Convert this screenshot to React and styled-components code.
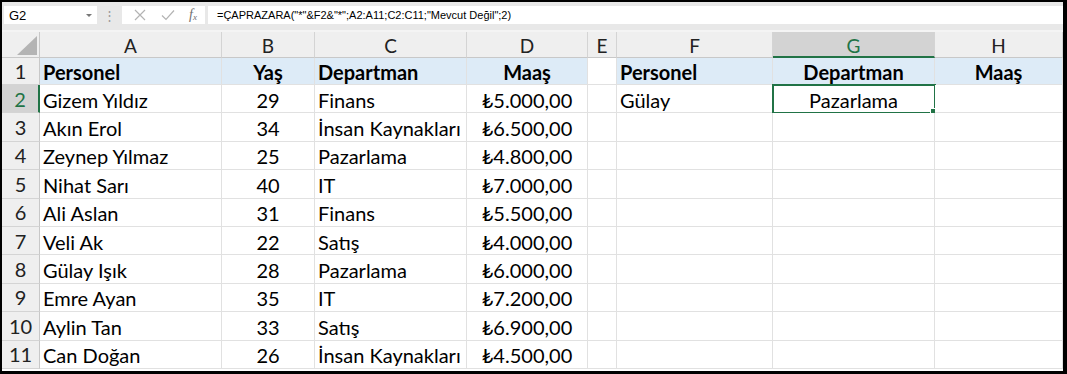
import React from "react";
import styled, { createGlobalStyle } from "styled-components";

const GlobalStyle = createGlobalStyle`
    html, body {
        margin: 0;
        padding: 0;
        background: #fff;
    }
`;

const columns = [
    { key: "A", width: 182 },
    { key: "B", width: 93 },
    { key: "C", width: 152 },
    { key: "D", width: 121 },
    { key: "E", width: 29 },
    { key: "F", width: 156 },
    { key: "G", width: 162 },
    { key: "H", width: 128 },
];

const people = [
    ["Gizem Yıldız", 29, "Finans", "₺5.000,00"],
    ["Akın Erol", 34, "İnsan Kaynakları", "₺6.500,00"],
    ["Zeynep Yılmaz", 25, "Pazarlama", "₺4.800,00"],
    ["Nihat Sarı", 40, "IT", "₺7.000,00"],
    ["Ali Aslan", 31, "Finans", "₺5.500,00"],
    ["Veli Ak", 22, "Satış", "₺4.000,00"],
    ["Gülay Işık", 28, "Pazarlama", "₺6.000,00"],
    ["Emre Ayan", 35, "IT", "₺7.200,00"],
    ["Aylin Tan", 33, "Satış", "₺6.900,00"],
    ["Can Doğan", 26, "İnsan Kaynakları", "₺4.500,00"],
];

const headerRow = {
    A: { text: "Personel", align: "left" },
    B: { text: "Yaş", align: "center" },
    C: { text: "Departman", align: "left" },
    D: { text: "Maaş", align: "center" },
    F: { text: "Personel", align: "left" },
    G: { text: "Departman", align: "center" },
    H: { text: "Maaş", align: "center" },
};

function rowCells(index) {
    if (index === 0) return headerRow;
    const p = people[index - 1];
    const cells = {
        A: { text: p[0], align: "left" },
        B: { text: p[1], align: "center" },
        C: { text: p[2], align: "left" },
        D: { text: p[3], align: "center" },
    };
    if (index === 1) {
        cells.F = { text: "Gülay", align: "left" };
        cells.G = { text: "Pazarlama", align: "center", selected: true };
    }
    return cells;
}

export default function App() {
    const template = `38px ${columns.map((c) => c.width + "px").join(" ")}`;
    return (
        <>
            <GlobalStyle />
            <Frame>
                <FormulaBar>
                    <NameBox>
                        <span>G2</span>
                        <DropArrow />
                    </NameBox>
                    <Grip>⋮</Grip>
                    <FxBox>
                        <svg width="14" height="14" viewBox="0 0 14 14">
                            <path d="M2 2 L12 12 M12 2 L2 12" stroke="#b3b3b3" strokeWidth="1.2" fill="none" />
                        </svg>
                        <svg width="16" height="14" viewBox="0 0 16 14">
                            <path d="M2 7.5 L6 11.5 L14 2.5" stroke="#b3b3b3" strokeWidth="1.2" fill="none" />
                        </svg>
                        <Fx>
                            f<sub>x</sub>
                        </Fx>
                    </FxBox>
                    <FormulaInput>=ÇAPRAZARA("*"&amp;F2&amp;"*";A2:A11;C2:C11;"Mevcut Değil";2)</FormulaInput>
                </FormulaBar>
                <Sheet style={{ gridTemplateColumns: template }}>
                    <Corner>
                        <Triangle />
                    </Corner>
                    {columns.map((c) => (
                        <ColHead key={c.key} $active={c.key === "G"}>
                            {c.key}
                        </ColHead>
                    ))}
                    {Array.from({ length: 11 }).map((_, i) => {
                        const cells = rowCells(i);
                        return (
                            <React.Fragment key={i}>
                                <RowHead $active={i === 1}>{i + 1}</RowHead>
                                {columns.map((c) => {
                                    const cell = cells[c.key];
                                    return (
                                        <Cell
                                            key={c.key}
                                            $title={i === 0 && c.key !== "E"}
                                            $align={cell ? cell.align : "left"}
                                            $selected={cell && cell.selected}
                                        >
                                            {cell ? cell.text : ""}
                                            {cell && cell.selected && <FillHandle />}
                                        </Cell>
                                    );
                                })}
                            </React.Fragment>
                        );
                    })}
                </Sheet>
            </Frame>
        </>
    );
}

const Frame = styled.div`
    width: 1067px;
    height: 374px;
    box-sizing: border-box;
    border: solid #000;
    border-width: 2px 4px 3px 2px;
    background: #fff;
    overflow: hidden;
    display: flex;
    flex-direction: column;
`;

const FormulaBar = styled.div`
    height: 30px;
    box-sizing: border-box;
    background: #e8e8e8;
    display: flex;
    align-items: center;
    padding: 0 0 2px 2px;
    font-family: "Liberation Sans", Arial, sans-serif;
    font-size: 12px;
    color: #000;
    border-bottom: 2px solid #f4f4f4;
`;

const NameBox = styled.div`
    width: 93px;
    height: 18px;
    box-sizing: border-box;
    background: #fff;
    display: flex;
    align-items: center;
    justify-content: space-between;
    padding: 0 5px 0 5px;
    font-size: 13px;
`;

const DropArrow = styled.span`
    width: 0;
    height: 0;
    border-left: 3px solid transparent;
    border-right: 3px solid transparent;
    border-top: 3px solid #777;
`;

const Grip = styled.div`
    width: 25px;
    text-align: center;
    color: #9a9a9a;
    font-size: 13px;
`;

const FxBox = styled.div`
    width: 83px;
    height: 18px;
    background: #fff;
    display: flex;
    align-items: center;
    justify-content: space-between;
    padding: 0 8px 0 11px;
    box-sizing: border-box;
`;

const Fx = styled.span`
    font-family: "Liberation Serif", serif;
    font-style: italic;
    font-size: 14px;
    color: #707070;
    line-height: 1;
    sub {
        font-size: 9px;
        vertical-align: -1px;
    }
`;

const FormulaInput = styled.div`
    flex: 1;
    height: 18px;
    margin-left: 3px;
    background: #fff;
    display: flex;
    align-items: center;
    padding-left: 9px;
    font-size: 11px;
    white-space: nowrap;
`;

const Sheet = styled.div`
    display: grid;
    grid-template-rows: 26px 27px repeat(10, 28.4px);
    font-family: Lato, "Open Sans", sans-serif;
`;

const Corner = styled.div`
    background: #efefef;
    border-right: 1px solid #c8c8c8;
    border-bottom: 1px solid #c8c8c8;
    position: relative;
`;

const Triangle = styled.div`
    position: absolute;
    right: 2px;
    bottom: 2px;
    width: 0;
    height: 0;
    border-left: 20px solid transparent;
    border-bottom: 19px solid #b4b4b4;
`;

const ColHead = styled.div`
    background: ${(p) => (p.$active ? "#d3d3d3" : "#efefef")};
    border-right: 1px solid #d4d4d4;
    border-bottom: ${(p) => (p.$active ? "2px solid #217346" : "1px solid #c8c8c8")};
    display: flex;
    align-items: center;
    justify-content: center;
    font-size: 19px;
    color: ${(p) => (p.$active ? "#217346" : "#222")};
    padding-top: 2px;
    box-sizing: border-box;
`;

const RowHead = styled.div`
    background: ${(p) => (p.$active ? "#d3d3d3" : "#efefef")};
    border-right: ${(p) => (p.$active ? "2px solid #217346" : "1px solid #c8c8c8")};
    border-bottom: 1px solid #d4d4d4;
    display: flex;
    align-items: center;
    justify-content: center;
    font-size: 20px;
    color: ${(p) => (p.$active ? "#217346" : "#222")};
    box-sizing: border-box;
`;

const Cell = styled.div`
    position: relative;
    background: ${(p) => (p.$title ? "#ddebf7" : "#fff")};
    border-right: 1px solid #e1e1e1;
    border-bottom: 1px solid #e1e1e1;
    box-sizing: border-box;
    display: flex;
    align-items: center;
    justify-content: ${(p) => (p.$align === "center" ? "center" : "flex-start")};
    padding: 2px 3px 0 3px;
    font-size: 20px;
    font-weight: ${(p) => (p.$title ? 700 : 400)};
    color: #000;
    white-space: nowrap;
    overflow: visible;
    outline: ${(p) => (p.$selected ? "2px solid #217346" : "none")};
    outline-offset: -1px;
`;

const FillHandle = styled.span`
    position: absolute;
    right: -3px;
    bottom: -3px;
    width: 5px;
    height: 5px;
    background: #217346;
    border: 1px solid #fff;
`;
